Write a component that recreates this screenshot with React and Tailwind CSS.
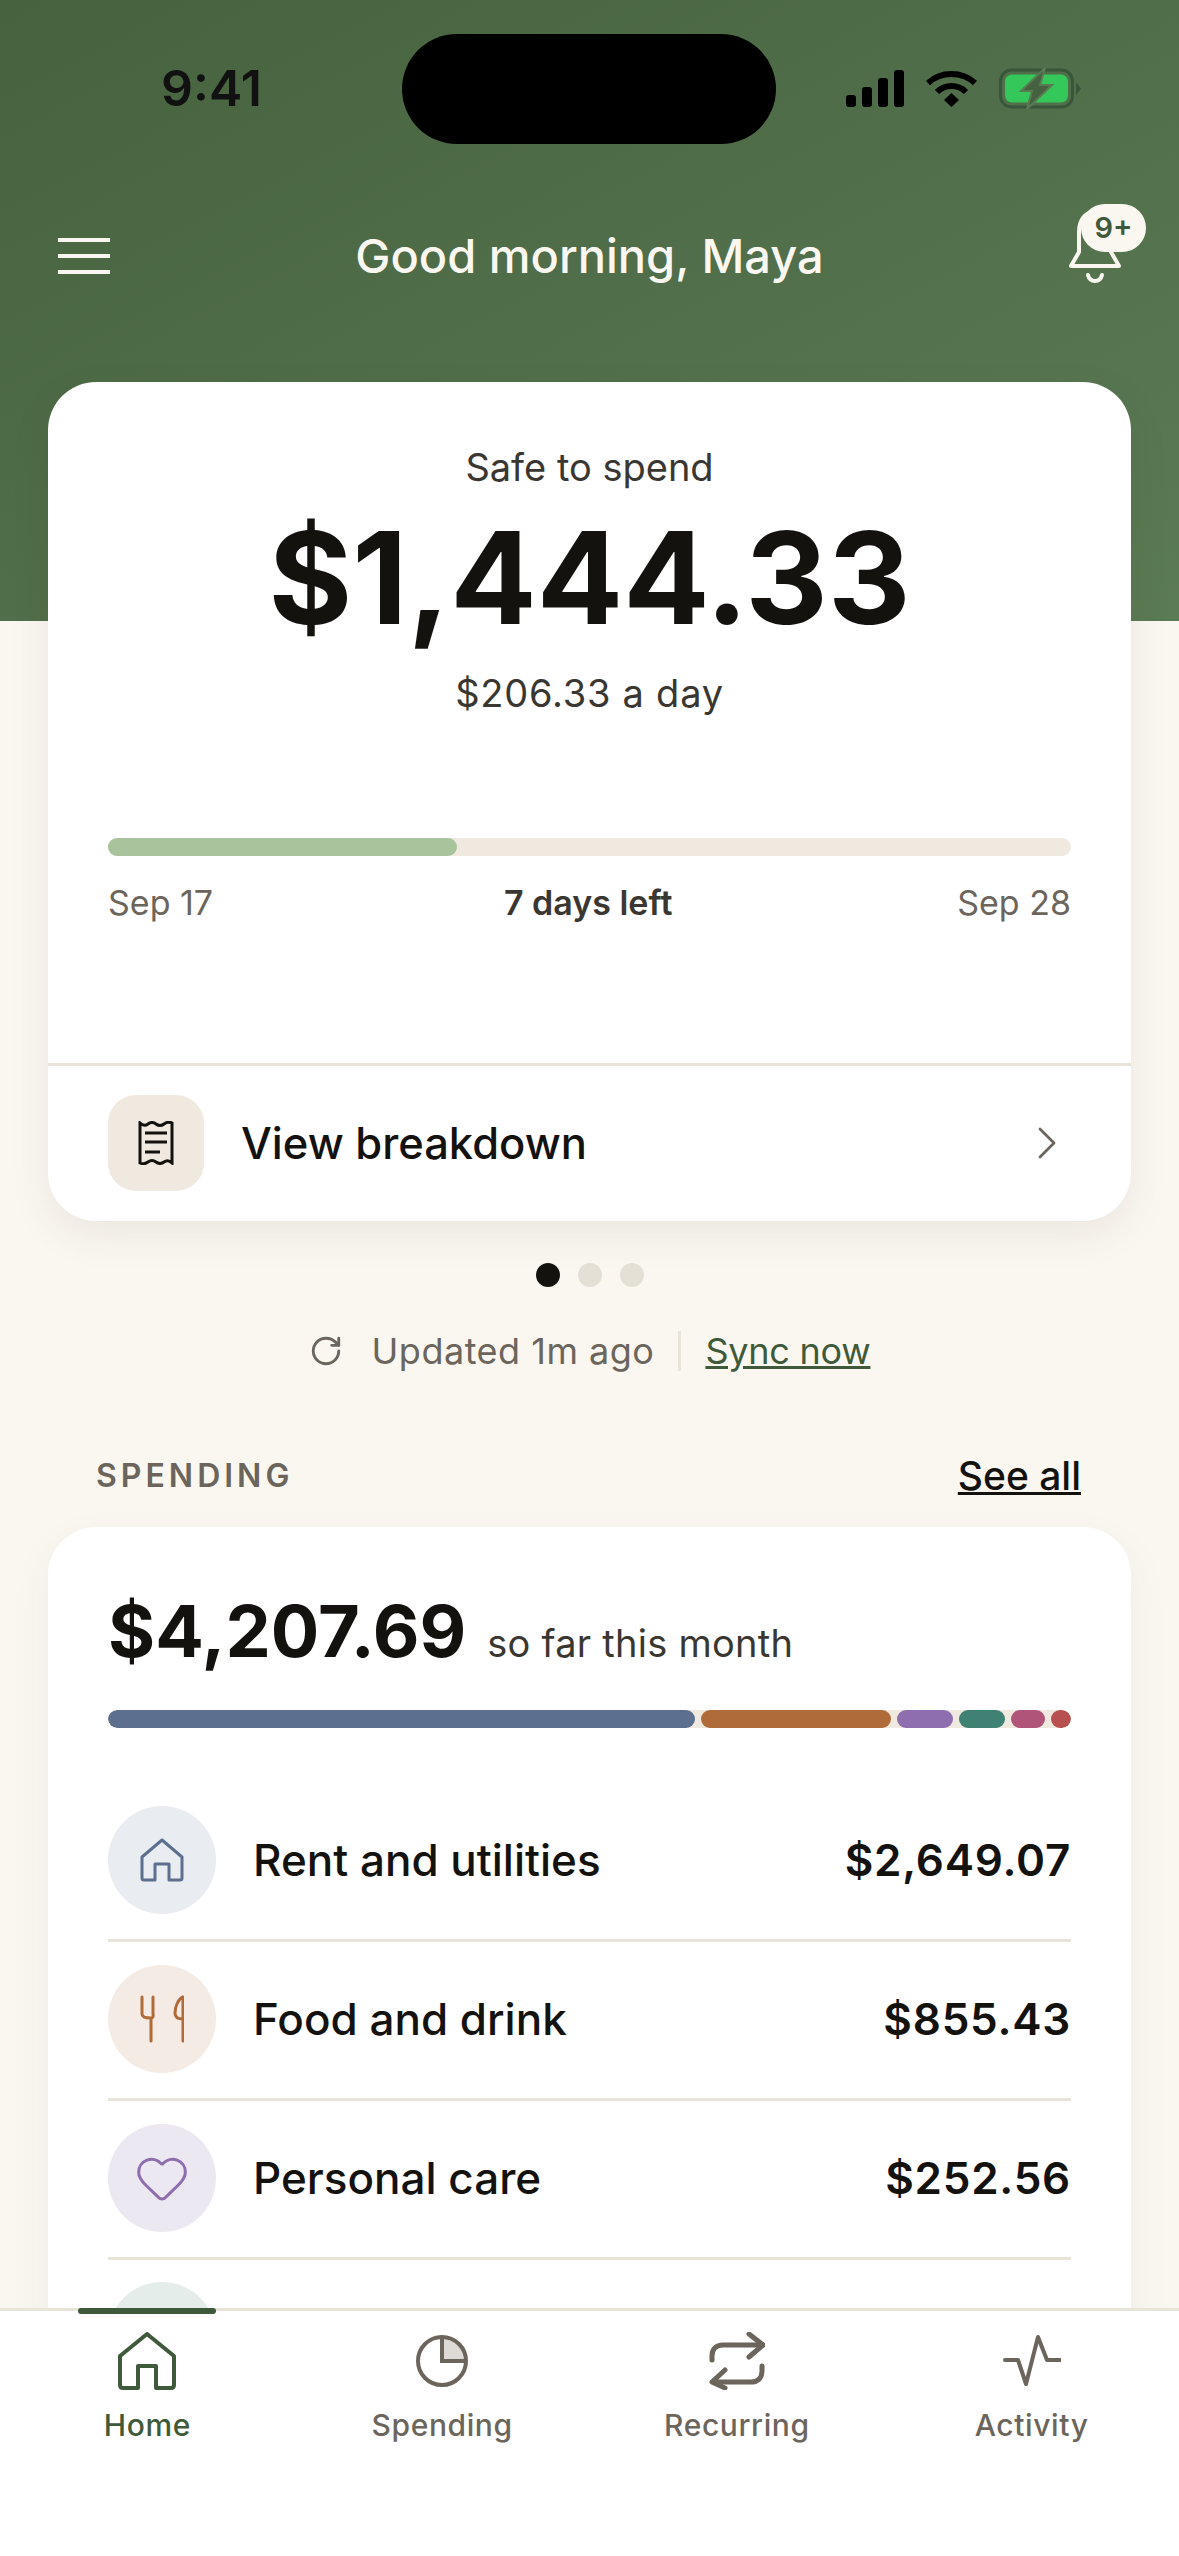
import { ChevronRight, Heart, RotateCw } from 'lucide-react';

const segments = [
  { width: 'w-[587px]', color: 'bg-[#5c6f8f]' },
  { width: 'w-[190px]', color: 'bg-[#b06b3a]' },
  { width: 'w-[56px]', color: 'bg-[#8e6eae]' },
  { width: 'w-[46px]', color: 'bg-[#3f8274]' },
  { width: 'w-[34px]', color: 'bg-[#b05579]' },
  { width: 'w-[20px]', color: 'bg-[#b84f50]' },
];

function StatusIcons() {
  return (
    <div className="flex items-center">
      <svg width="58" height="37" viewBox="0 0 58 37" fill="#000">
        <rect x="0" y="25" width="10" height="12" rx="3" />
        <rect x="16" y="17" width="10" height="20" rx="3" />
        <rect x="32" y="8" width="10" height="29" rx="3" />
        <rect x="48" y="0" width="10" height="37" rx="3" />
      </svg>
      <svg className="ml-[22px]" width="51" height="37" viewBox="0 0 51 37" fill="none" stroke="#000" strokeWidth="6">
        <path d="M2 13C15 1 36 1 49 13" />
        <path d="M11 22C19 14 32 14 40 22" />
        <path d="M18 30L25.5 23L33 30L25.5 37Z" fill="#000" stroke="none" />
      </svg>
      <svg className="ml-[22px]" width="82" height="41" viewBox="0 0 82 41" fill="none">
        <rect x="1.5" y="2" width="72" height="37" rx="11" stroke="#38563a" strokeWidth="3" />
        <rect x="6" y="6.5" width="63" height="28" rx="7" fill="#34c759" />
        <path d="M77 14L82 20.5L77 27Z" fill="#38563a" />
        <path d="M46 0L22 23H33L28 41L53 17H41Z" fill="#46613f" stroke="#5a7a53" strokeWidth="2" />
      </svg>
    </div>
  );
}

function BellIcon() {
  return (
    <svg width="52" height="80" viewBox="0 0 52 80" fill="none" stroke="#faf7f1" strokeWidth="4" strokeLinecap="round" strokeLinejoin="round">
      <path d="M2 60H50L42 46V26C42 14 36 6 26 6C16 6 10 14 10 26V46Z" />
      <path d="M19 69C21 77 31 77 33 69" />
    </svg>
  );
}

function ReceiptIcon() {
  return (
    <svg width="36" height="44" viewBox="0 0 36 44" fill="none" stroke="#14120f" strokeWidth="3">
      <path d="M2 2Q6 6 10 3T18 3T26 3T34 2V42Q30 38 26 41T18 41T10 41T2 42Z" />
      <path d="M7 12H29M7 21H29M7 31H22" strokeWidth="3" />
    </svg>
  );
}

function SmallHome() {
  return (
    <svg width="44" height="44" viewBox="0 0 44 44" fill="none" stroke="#5c6f8f" strokeWidth="3" strokeLinejoin="round">
      <path d="M22 2L42 19V40C42 41.500 41 42 40 42H29V26H15V42H4C3 42 2 41.500 2 40V19Z" />
    </svg>
  );
}

function ForkKnife() {
  return (
    <svg width="44" height="48" viewBox="0 0 44 48" fill="none" stroke="#b06b3a" strokeWidth="3" strokeLinecap="round" strokeLinejoin="round">
      <path d="M2 2V19C2 22 5 23 11 23V46M11 23C14 23 13 20 13 18V2" />
      <path d="M43 46V2C38 4 35 12 35 18C35 22 38 24 43 24" />
    </svg>
  );
}

function NavHome() {
  return (
    <svg width="58" height="58" viewBox="0 0 58 58" fill="none" stroke="#3f5a3a" strokeWidth="4" strokeLinejoin="round">
      <path d="M29 2L56 24V53C56 55 55 56 53 56H38V34H20V56H5C3 56 2 55 2 53V24Z" />
    </svg>
  );
}

function NavPie() {
  return (
    <svg width="52" height="52" viewBox="0 0 52 52" fill="none" stroke="#6b655c" strokeWidth="4">
      <path d="M26 26V2A24 24 0 0 1 50 26Z" fill="#dedbd6" stroke="none" />
      <circle cx="26" cy="26" r="24" />
      <path d="M26 2V26H50" />
    </svg>
  );
}

function NavRepeat() {
  return (
    <svg width="56" height="58" viewBox="0 0 56 58" fill="none" stroke="#6b655c" strokeWidth="5" strokeLinecap="round" strokeLinejoin="round">
      <path d="M3 28V24C3 17 7 13 14 13H54" />
      <path d="M40 2L54 13L40 25" />
      <path d="M53 34V39C53 46 49 50 42 50H4" />
      <path d="M16 38L3 50L16 56" />
    </svg>
  );
}

function NavActivity() {
  return (
    <svg width="58" height="54" viewBox="0 0 58 54" fill="none" stroke="#6b655c" strokeWidth="4" strokeLinecap="round" strokeLinejoin="round">
      <path d="M2 26H15L23 50L35 3L44 26H57" />
    </svg>
  );
}

function CategoryRow({ icon, tint, name, amount }) {
  return (
    <div className="flex items-center pt-[23px] pb-[25px] border-b-[3px] border-[#e8e4da]">
      <div className={`w-[108px] h-[108px] rounded-full flex items-center justify-center ${tint}`}>{icon}</div>
      <div className="ml-[37px] flex-1 text-[44px] leading-[56px] font-[450] text-[#14120f]">{name}</div>
      <div className="text-[44px] leading-[56px] font-semibold tracking-[0.75px] text-[#14120f]">{amount}</div>
    </div>
  );
}

function NavItem({ icon, label, active }) {
  return (
    <div className="relative flex flex-col items-center w-[295px]">
      {active && <div className="absolute top-[-24px] left-[78px] w-[138px] h-[6px] rounded-full bg-[#3f5a3a]" />}
      <div className="h-[58px] flex items-center justify-center">{icon}</div>
      <div className={`mt-[15px] text-[30px] leading-[40px] font-[450] tracking-[0.6px] ${active ? 'text-[#3f5a3a]' : 'text-[#6b655c]'}`}>
        {label}
      </div>
    </div>
  );
}

export default function App() {
  return (
    <div className="w-[1179px] h-[2556px] flex flex-col overflow-hidden bg-[#faf7f1] font-['Inter',sans-serif]">
      <div className="flex-1 min-h-0 overflow-hidden">
        <header className="h-[621px] bg-linear-to-br from-[#46623e] to-[#5b7b55]">
          <div className="flex pt-[34px]">
            <div className="w-[402px] pl-[161px] pt-[27px] text-[50px] leading-[54px] font-semibold text-[#111]">9:41</div>
            <div className="w-[374px] h-[110px] rounded-full bg-black" />
            <div className="pl-[70px] pt-[34px]"><StatusIcons /></div>
          </div>
          <div className="relative mt-[67px] h-[90px] flex items-center justify-between pl-[58px] pr-[58px]">
            <div className="w-[52px] flex flex-col gap-[12px]">
              <div className="h-[4px] bg-[#faf7f1]" />
              <div className="h-[4px] bg-[#faf7f1]" />
              <div className="h-[4px] bg-[#faf7f1]" />
            </div>
            <h1 className="text-[47px] leading-[60px] font-medium text-[#faf7f1]">Good morning, Maya</h1>
            <div className="relative w-[52px] h-[80px] mt-[-20px]">
              <BellIcon />
              <div className="absolute top-[-2px] left-[12px] w-[65px] h-[48px] rounded-full bg-[#faf7f1] flex items-center justify-center text-[29px] font-semibold text-[#3f5a3a]">9+</div>
            </div>
          </div>
        </header>

        <main className="px-[48px] mt-[-239px]">
          <section className="rounded-[48px] bg-white shadow-[0_14px_40px_rgba(60,50,30,0.08)]">
            <div className="px-[60px] pt-[61px] pb-[140px] text-center">
              <div className="text-[38px] leading-[48px] text-[#3a3732]">Safe to spend</div>
              <div className="mt-[19px] text-[128px] leading-[136px] font-bold text-[#14120f]">$1,444.33</div>
              <div className="mt-[23px] text-[38px] leading-[48px] tracking-[0.75px] text-[#3a3732]">$206.33 a day</div>
              <div className="mt-[121px] h-[18px] rounded-full bg-[#efe9df]">
                <div className="w-[349px] h-full rounded-full bg-[#a9c49c]" />
              </div>
              <div className="mt-[27px] flex justify-between text-[34px] leading-[40px] text-[#6b655c]">
                <span>Sep 17</span>
                <span className="ml-[6px] font-semibold text-[#3a3732]">7 days left</span>
                <span>Sep 28</span>
              </div>
            </div>
            <div className="flex items-center border-t-[3px] border-[#e8e4da] pl-[60px] pr-[56px] pt-[29px] pb-[30px]">
              <div className="w-[96px] h-[96px] rounded-[28px] bg-[#efe9df] flex items-center justify-center"><ReceiptIcon /></div>
              <div className="ml-[37px] flex-1 text-[43.500px] leading-[56px] font-[450] text-[#14120f]">View breakdown</div>
              <ChevronRight size={56} strokeWidth={1.2} color="#6b655c" />
            </div>
          </section>

          <div className="mt-[42px] flex justify-center gap-[18px]">
            <div className="w-[24px] h-[24px] rounded-full bg-[#14120f]" />
            <div className="w-[24px] h-[24px] rounded-full bg-[#e4e0d6]" />
            <div className="w-[24px] h-[24px] rounded-full bg-[#e4e0d6]" />
          </div>

          <div className="mt-[44px] flex items-center justify-center text-[36px] leading-[40px] text-[#6b655c]">
            <RotateCw size={34} strokeWidth={2} color="#6b655c" />
            <span className="ml-[29px] tracking-[0.5px]">Updated 1m ago</span>
            <div className="mx-[24px] w-[3px] h-[40px] bg-[#e8e4da]" />
            <span className="tracking-[-0.25px] text-[#3f5a3a] underline">Sync now</span>
          </div>

          <div className="mt-[85px] px-[48px] pr-[50px] flex items-center justify-between">
            <span className="text-[32px] leading-[40px] font-semibold tracking-[4px] text-[#6b655c]">SPENDING</span>
            <span className="text-[39px] leading-[40px] font-medium text-[#14120f] underline">See all</span>
          </div>

          <section className="mt-[31px] rounded-[48px] bg-white px-[60px] pt-[62px] pb-[40px] shadow-[0_14px_40px_rgba(60,50,30,0.06)]">
            <div className="flex items-baseline">
              <span className="text-[72px] leading-[84px] font-bold text-[#14120f]">$4,207.69</span>
              <span className="ml-[21px] text-[38px] leading-[48px] tracking-[0.25px] text-[#3a3732]">so far this month</span>
            </div>
            <div className="mt-[37px] flex h-[18px] gap-[6px] rounded-full bg-[#efe9df] overflow-hidden">
              {segments.map((segment) => (
                <div key={segment.color} className={`h-full rounded-full ${segment.width} ${segment.color}`} />
              ))}
            </div>
            <div className="mt-[55px]">
              <CategoryRow icon={<SmallHome />} tint="bg-[#e9ecf1]" name="Rent and utilities" amount="$2,649.07" />
              <CategoryRow icon={<ForkKnife />} tint="bg-[#f4ebe4]" name="Food and drink" amount="$855.43" />
              <CategoryRow icon={<Heart size={56} strokeWidth={1.3} color="#8e6eae" />} tint="bg-[#ece8f2]" name="Personal care" amount="$252.56" />
              <div className="pt-[22px]">
                <div className="w-[108px] h-[108px] rounded-full bg-[#e4edea]" />
              </div>
            </div>
          </section>
        </main>
      </div>

      <nav className="h-[248px] shrink-0 bg-white border-t-[3px] border-[#e8e4da] flex pt-[21px]">
        <NavItem active icon={<NavHome />} label="Home" />
        <NavItem icon={<NavPie />} label="Spending" />
        <NavItem icon={<NavRepeat />} label="Recurring" />
        <NavItem icon={<NavActivity />} label="Activity" />
      </nav>
    </div>
  );
}
